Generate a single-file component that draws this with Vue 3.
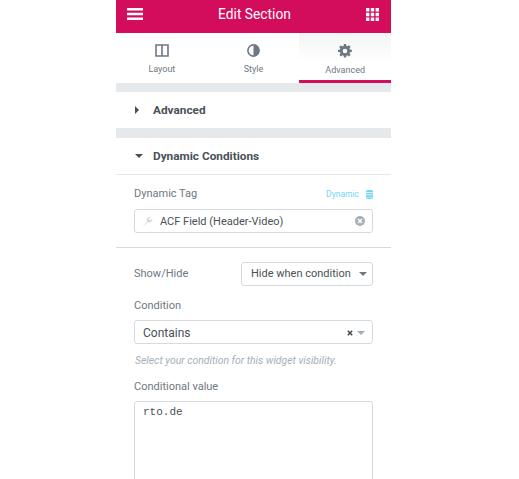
<script setup>
const tabs = [
  { name: 'Layout', icon: 'layout' },
  { name: 'Style', icon: 'style' },
  { name: 'Advanced', icon: 'gear', active: true },
]
</script>

<template>
  <div class="page">
    <aside class="panel">
      <header class="head">
        <svg class="menu" width="16" height="12" viewBox="0 0 16 12"><path d="M0 0h16v2.4H0zM0 4.8h16v2.4H0zM0 9.6h16V12H0z" fill="#fff" /></svg>
        <h1>Edit Section</h1>
        <svg class="grid" width="13" height="13" viewBox="0 0 13 13" fill="#fff">
          <path d="M0 0h3.4v3.4H0zM4.8 0h3.4v3.4H4.8zM9.6 0H13v3.4H9.6zM0 4.8h3.4v3.4H0zM4.8 4.8h3.4v3.4H4.8zM9.6 4.8H13v3.4H9.6zM0 9.6h3.4V13H0zM4.8 9.6h3.4V13H4.8zM9.6 9.6H13V13H9.6z" />
        </svg>
      </header>

      <nav class="tabs">
        <div v-for="t in tabs" :key="t.name" class="tab" :class="{ active: t.active }">
          <svg v-if="t.icon === 'layout'" width="14" height="13" viewBox="0 0 14 13"><path d="M1 1h12v11H1zM7 1v11" fill="none" stroke="#6d7882" stroke-width="1.6" /></svg>
          <svg v-else-if="t.icon === 'style'" width="13" height="13" viewBox="0 0 13 13"><circle cx="6.5" cy="6.5" r="5.6" fill="none" stroke="#6d7882" stroke-width="1.6" /><path d="M6.5 1a5.5 5.5 0 0 1 0 11z" fill="#6d7882" /></svg>
          <svg v-else width="14" height="14" viewBox="0 0 14 14"><path fill-rule="evenodd" fill="#6d7882" d="M5.9 0h2.2l.3 1.9 1 .4 1.6-1.1 1.6 1.6-1.1 1.6.4 1 1.9.3v2.2l-1.9.3-.4 1 1.1 1.6-1.6 1.6-1.6-1.1-1 .4-.3 1.9H5.9l-.3-1.9-1-.4-1.6 1.1-1.6-1.6 1.100-1.600-.4-1L0 8.100V5.900l1.900-.300.4-1L1.200 3l1.600-1.600 1.700 1.100 1-.4z M7 4.700a2.300 2.300 0 1 0 0 4.600 2.300 2.300 0 0 0 0-4.600z" /></svg>
          <span>{{ t.name }}</span>
        </div>
      </nav>

      <div class="band first"></div>
      <div class="section closed">
        <span class="tri-slot"><span class="tri right"></span></span>
        <strong>Advanced</strong>
      </div>
      <div class="band"></div>
      <div class="section open">
        <span class="tri-slot"><span class="tri down"></span></span>
        <strong>Dynamic Conditions</strong>
      </div>

      <div class="control dyn">
        <div class="row">
          <label>Dynamic Tag</label>
          <span class="dynamic">Dynamic
            <svg width="7" height="9" viewBox="0 0 7 9"><path d="M0 1.200C0 .4 1.500 0 3.500 0S7 .4 7 1.200v.8H0zM0 2.800h7v1.700H0zM0 5.200h7V7H0zM0 7.600h7v.3C7 8.600 5.500 9 3.500 9S0 8.600 0 7.900z" fill="#71d7f7" /></svg>
          </span>
        </div>
        <div class="box tag">
          <svg width="11" height="11" viewBox="0 0 11 11"><path d="M.5 10.500 5.200 5.200a2.800 2.800 0 0 1 .6-3.700 3 3 0 0 1 3-.7L7 2.600l.3 1.200 1.300.3 1.700-1.700a3 3 0 0 1-.8 3 2.800 2.800 0 0 1-3.600.6z" fill="#d5dadf" /></svg>
          <span class="value">ACF Field (Header-Video)</span>
          <svg class="clear" width="10" height="10" viewBox="0 0 10 10"><circle cx="5" cy="5" r="5" fill="#a4afb7" /><path d="M3 3l4 4M7 3L3 7" stroke="#fff" stroke-width="1.400" /></svg>
        </div>
      </div>

      <div class="control inline">
        <label>Show/Hide</label>
        <div class="box select">
          <span>Hide when condition</span>
          <span class="caret"></span>
        </div>
      </div>

      <div class="control cond">
        <label>Condition</label>
        <div class="box contains">
          <span class="grow">Contains</span>
          <svg width="6" height="6" viewBox="0 0 6 6"><path d="M.8.800l4.400 4.400M5.200.800.800 5.200" stroke="#444" stroke-width="1.500" /></svg>
          <span class="caret light"></span>
        </div>
        <p class="hint">Select your condition for this widget visibility.</p>
      </div>

      <div class="control val">
        <label>Conditional value</label>
        <div class="area">rto.de</div>
      </div>
    </aside>
  </div>
</template>

<style>
html, body { margin: 0; background: #fff; overflow: hidden; }
</style>

<style scoped>
.page {
  height: 479px;
  overflow: hidden;
  padding-left: 116px;
  font-family: Roboto, "Liberation Sans", sans-serif;
  color: #6d7882;
}
.panel { width: 275px; background: #fff; }
.head {
  height: 33px;
  box-sizing: border-box;
  padding: 0 12px 5px 11px;
  background: #d30c5c;
  display: flex;
  align-items: center;
  justify-content: space-between;
}
.head h1 {
  margin: 0;
  font-size: 13.8px;
  font-weight: 400;
  color: #fff;
}
.tabs { display: flex; height: 50px; }
.tab {
  flex: 1;
  display: flex;
  flex-direction: column;
  align-items: center;
  padding-top: 11px;
  box-sizing: border-box;
  gap: 6px;
  font-size: 9px;
  color: #6d7882;
}
.tab span { line-height: 12px; }
.tab.active {
  background: linear-gradient(#f3f4f5, #fff 60%);
  border-bottom: 3px solid #d30c5c;
}
.band { height: 10px; background: #e6e9ec; }
.band.first { height: 9px; }
.section {
  height: 36px;
  display: flex;
  align-items: center;
  font-size: 12px;
  color: #495157;
  box-sizing: border-box;
  padding-left: 19px;
}
.section.open { height: 37px; border-bottom: 1px solid #e6e9ec; }
.section strong { font-weight: 700; font-size: 11.8px; }
.tri-slot { width: 18px; display: block; }
.tri { width: 0; height: 0; display: block; }
.tri.right {
  border-left: 4px solid #495157;
  border-top: 4px solid transparent;
  border-bottom: 4px solid transparent;
}
.tri.down {
  border-top: 4px solid #495157;
  border-left: 4px solid transparent;
  border-right: 4px solid transparent;
}
.control { padding: 0 18px; }
label { font-size: 11px; color: #6d7882; line-height: 14px; }
.dyn {
  padding-top: 12px;
  padding-bottom: 14px;
  border-bottom: 1px solid #d5dadf;
}
.row {
  display: flex;
  justify-content: space-between;
  align-items: center;
  margin-bottom: 8px;
}
.dynamic {
  font-size: 8.5px;
  color: #71d7f7;
  display: flex;
  align-items: center;
  gap: 7px;
}
.box {
  box-sizing: border-box;
  height: 24px;
  border: 1px solid #d5dadf;
  border-radius: 3px;
  display: flex;
  align-items: center;
  font-size: 11px;
  color: #495157;
  background: #fff;
}
.tag { padding: 0 7px; gap: 7px; }
.tag .value { flex: 1; }
.inline {
  display: flex;
  justify-content: space-between;
  align-items: center;
  padding-top: 14px;
}
.select {
  width: 132px;
  padding: 0 5px 1px 9px;
  justify-content: space-between;
  white-space: nowrap;
}
.caret {
  width: 0;
  height: 0;
  border-top: 4px solid #6d7882;
  border-left: 4px solid transparent;
  border-right: 4px solid transparent;
}
.caret.light { border-top-color: #a4afb7; margin-left: 4px; }
.cond { padding-top: 13px; }
.cond label { display: block; margin-bottom: 7px; }
.contains { padding: 1px 7px 0 8px; font-size: 12px; }
.grow { flex: 1; }
.hint {
  margin: 10px 0 0 1px;
  font-size: 10.4px;
  font-style: italic;
  color: #a4afb7;
  line-height: 14px;
  white-space: nowrap;
}
.val { padding-top: 12px; }
.val label { display: block; margin-bottom: 7px; }
.area {
  box-sizing: border-box;
  height: 120px;
  border: 1px solid #d5dadf;
  border-radius: 3px;
  padding: 3px 8px;
  font-family: "Liberation Mono", monospace;
  font-size: 11px;
  line-height: 15px;
  color: #495157;
}
</style>
